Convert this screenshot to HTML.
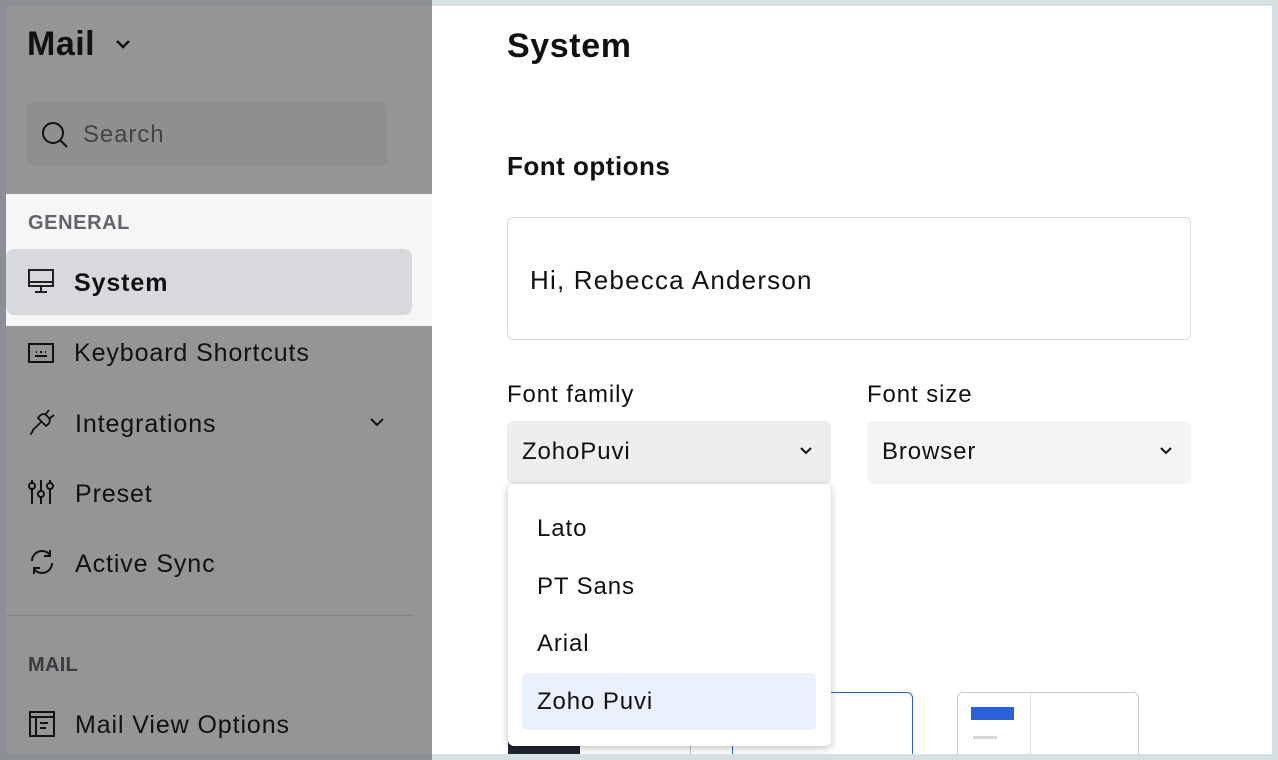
<!DOCTYPE html>
<html><head><meta charset="utf-8"><style>
*{margin:0;padding:0;box-sizing:border-box}
body{width:1278px;height:760px;overflow:hidden;background:#d6dfe3;font-family:"Liberation Sans",sans-serif;color:#1b1b1f;position:relative}
.main{position:absolute;left:432px;top:6px;width:840px;height:748px;background:#fff;overflow:hidden}
.side{position:absolute;left:0;top:0;width:432px;height:760px;background:#8a9095}
.sidein{position:absolute;left:6px;top:6px;width:426px;height:748px;background:#959595}
.abs{position:absolute}
.t{position:absolute;white-space:nowrap;letter-spacing:0.9px}
svg{position:absolute}
</style></head><body>
<div class="side"><div class="sidein"></div></div>
<div class="abs" style="left:6px;top:194px;width:426px;height:132px;background:#f6f6f6"></div>
<div class="abs" style="left:6px;top:249px;width:406px;height:66px;background:#d8d9dd;border-radius:8px"></div>

<div class="t" style="left:27px;top:25px;font-size:34px;font-weight:bold;color:#111;letter-spacing:0.5px">Mail</div>
<svg style="left:114px;top:38px" width="18" height="12" viewBox="0 0 18 12"><path d="M3 3l6 6 6-6" fill="none" stroke="#111" stroke-width="2.4"/></svg>
<div class="abs" style="left:27px;top:102px;width:360px;height:64px;background:#8f8f8f;border-radius:6px"></div>
<svg style="left:40px;top:120px" width="30" height="30" viewBox="0 0 30 30"><circle cx="13" cy="13" r="10" fill="none" stroke="#111" stroke-width="2"/><path d="M20 20l7 7" stroke="#111" stroke-width="2"/></svg>
<div class="t" style="left:83px;top:121px;font-size:24px;color:#444">Search</div>

<div class="t" style="left:28px;top:212px;font-size:20px;font-weight:bold;color:#62646b;letter-spacing:0.6px">GENERAL</div>
<svg style="left:27px;top:268px" width="28" height="28" viewBox="0 0 28 28"><rect x="2" y="2" width="24" height="16" fill="none" stroke="#222" stroke-width="2"/><path d="M2 14h24M14 18v6M8 24h12" stroke="#222" stroke-width="2"/></svg>
<div class="t" style="left:74px;top:269px;font-size:25px;font-weight:bold;color:#111">System</div>

<svg style="left:27px;top:340px" width="28" height="26" viewBox="0 0 28 26"><rect x="2" y="4" width="24" height="18" fill="none" stroke="#111" stroke-width="2"/><path d="M9 12h1M13 12h2M18 12h1M8 16h12" stroke="#111" stroke-width="2"/></svg>
<div class="t" style="left:74px;top:339px;font-size:25px;color:#111">Keyboard Shortcuts</div>

<svg style="left:28px;top:408px" width="28" height="28" viewBox="0 0 28 28"><path d="M2 26c3 0 2-5 5-6M7 20l6-6M10 10l8 8c3-2 5-5 3-8l-3-3c-3-2-6 0-8 3zM17 7l4-5M21 11l5-4" fill="none" stroke="#111" stroke-width="1.8"/></svg>
<div class="t" style="left:75px;top:410px;font-size:25px;color:#111">Integrations</div>
<svg style="left:368px;top:416px" width="18" height="12" viewBox="0 0 18 12"><path d="M3 3l6 6 6-6" fill="none" stroke="#111" stroke-width="2"/></svg>

<svg style="left:28px;top:478px" width="26" height="28" viewBox="0 0 26 28"><path d="M4 2v24M13 2v24M22 2v24" stroke="#111" stroke-width="2"/><circle cx="4" cy="8" r="3" fill="#959595" stroke="#111" stroke-width="2"/><circle cx="13" cy="16" r="3" fill="#959595" stroke="#111" stroke-width="2"/><circle cx="22" cy="8" r="3" fill="#959595" stroke="#111" stroke-width="2"/></svg>
<div class="t" style="left:75px;top:480px;font-size:25px;color:#111">Preset</div>

<svg style="left:28px;top:548px" width="28" height="28" viewBox="0 0 28 28"><path d="M4 13a10 10 0 0 1 18-6M24 15a10 10 0 0 1-18 6M22 2v6h-6M6 26v-6h6" fill="none" stroke="#111" stroke-width="2"/></svg>
<div class="t" style="left:75px;top:550px;font-size:25px;color:#111">Active Sync</div>

<div class="abs" style="left:6px;top:615px;width:406px;height:1px;background:#858585"></div>
<div class="t" style="left:28px;top:654px;font-size:20px;font-weight:bold;color:#3a3b40;letter-spacing:0.3px">MAIL</div>
<svg style="left:28px;top:710px" width="28" height="28" viewBox="0 0 28 28"><rect x="2" y="2" width="24" height="24" fill="none" stroke="#111" stroke-width="2"/><path d="M2 7h24M8 7v19M12 13h8M12 18h6" stroke="#111" stroke-width="2"/></svg>
<div class="t" style="left:75px;top:711px;font-size:25px;color:#111">Mail View Options</div>

<div class="main">
<div class="t" style="left:75px;top:21px;font-size:34px;font-weight:bold;color:#111;letter-spacing:0.6px">System</div>
<div class="t" style="left:75px;top:145px;font-size:26px;font-weight:bold;color:#111;letter-spacing:0.5px">Font options</div>
<div class="abs" style="left:75px;top:211px;width:684px;height:123px;border:1px solid #d9d9d9;border-radius:6px"></div>
<div class="t" style="left:98px;top:259px;font-size:26px;color:#111;letter-spacing:1.2px">Hi, Rebecca Anderson</div>
<div class="t" style="left:75px;top:375px;font-size:24px;color:#111">Font family</div>
<div class="t" style="left:435px;top:375px;font-size:24px;color:#111">Font size</div>
<div class="abs" style="left:75px;top:415px;width:324px;height:63px;background:#eeeef0;border-radius:6px"></div>
<div class="t" style="left:90px;top:432px;font-size:24px;color:#111">ZohoPuvi</div>
<svg style="left:367px;top:440px" width="14" height="10" viewBox="0 0 14 10"><path d="M2 2l5 5 5-5" fill="none" stroke="#111" stroke-width="2"/></svg>
<div class="abs" style="left:435px;top:415px;width:324px;height:63px;background:#f4f4f5;border-radius:6px"></div>
<div class="t" style="left:450px;top:432px;font-size:24px;color:#111">Browser</div>
<svg style="left:727px;top:440px" width="14" height="10" viewBox="0 0 14 10"><path d="M2 2l5 5 5-5" fill="none" stroke="#111" stroke-width="2"/></svg>

<div class="abs" style="left:76px;top:686px;width:405px;height:80px;border:1px solid #2b62d9;border-radius:6px"></div>
<div class="abs" style="left:76px;top:734px;width:72px;height:20px;background:#1f2430"></div>
<div class="abs" style="left:258px;top:734px;width:1px;height:20px;background:#bbb"></div>
<div class="abs" style="left:300px;top:734px;width:1px;height:20px;background:#2b62d9"></div>
<div class="abs" style="left:525px;top:686px;width:182px;height:80px;border:1px solid #c8c8c8;border-radius:6px"></div>
<div class="abs" style="left:598px;top:687px;width:1px;height:70px;background:#ddd"></div>
<div class="abs" style="left:539px;top:701px;width:43px;height:13px;background:#2b62d9"></div>
<div class="abs" style="left:541px;top:730px;width:24px;height:3px;background:#d6d6d9"></div>

<div class="abs" style="left:76px;top:478px;width:323px;height:262px;background:#fff;border-radius:6px;box-shadow:0 2px 8px rgba(0,0,0,.25)"></div>
<div class="t" style="left:105px;top:509px;font-size:24px;color:#111">Lato</div>
<div class="t" style="left:105px;top:567px;font-size:24px;color:#111">PT Sans</div>
<div class="t" style="left:105px;top:624px;font-size:24px;color:#111">Arial</div>
<div class="abs" style="left:90px;top:667px;width:294px;height:57px;background:#e9f0fc;border-radius:6px"></div>
<div class="t" style="left:105px;top:682px;font-size:24px;color:#111">Zoho Puvi</div>
</div>
</body></html>
